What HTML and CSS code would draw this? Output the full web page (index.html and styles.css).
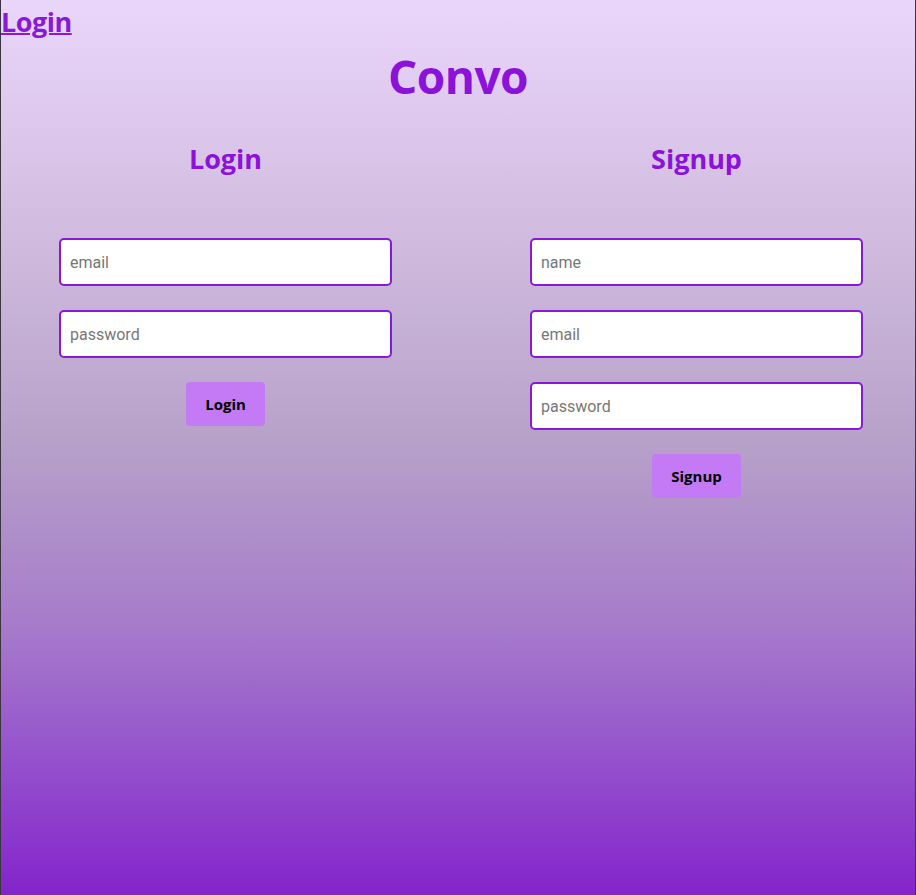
FILE: index.html
```html
<!DOCTYPE html>
<html>
<head>
<meta charset="utf-8">
<link rel="stylesheet" href="styles.css">
</head>
<body>
<a class="top-link" href="#">Login</a>
<h1 class="brand">Convo</h1>
<div class="columns">
  <form class="panel">
    <h2 class="panel-title">Login</h2>
    <input class="field" type="text" placeholder="email">
    <input class="field" type="password" placeholder="password">
    <button class="btn" type="button">Login</button>
  </form>
  <form class="panel">
    <h2 class="panel-title">Signup</h2>
    <input class="field" type="text" placeholder="name">
    <input class="field" type="text" placeholder="email">
    <input class="field" type="password" placeholder="password">
    <button class="btn" type="button">Signup</button>
  </form>
</div>
</body>
</html>
```
FILE: styles.css
```css
html, body {
  margin: 0;
  height: 100%;
}
body {
  box-sizing: border-box;
  border-left: 1px solid #3a3540;
  border-right: 1px solid #3a3540;
  background: linear-gradient(to bottom, #ebd6fb 0%, #cdb8dc 30%, #b6a0c8 50%, #a67bcb 70%, #9451cc 85%, #8424cb 100%);
  font-family: "Open Sans", "DejaVu Sans", sans-serif;
}
.top-link {
  display: inline-block;
  font-size: 27px;
  font-weight: 700;
  line-height: 44px;
  color: #8a18d8;
  text-decoration: underline;
  text-decoration-thickness: 2px;
  letter-spacing: -0.5px;
}
.brand {
  margin: 0;
  text-align: center;
  font-size: 46px;
  font-weight: 700;
  line-height: 64px;
  color: #8a12d9;
  letter-spacing: -0.5px;
}
.columns {
  display: flex;
  gap: 138px;
  padding-left: 58px;
  margin-top: 31px;
}
.panel {
  width: 333px;
  display: flex;
  flex-direction: column;
  align-items: center;
}
.panel-title {
  margin: 0 0 59px;
  font-size: 27px;
  font-weight: 700;
  line-height: 40px;
  color: #8a12d9;
}
.field {
  box-sizing: border-box;
  width: 333px;
  height: 48px;
  margin-bottom: 24px;
  padding: 0 9px;
  border: 2px solid #8a18d8;
  border-radius: 5px;
  background: #fff;
  font-family: "Roboto", "Liberation Sans", sans-serif;
  font-size: 16px;
  outline: none;
}
.field::placeholder {
  color: #777;
}
.btn {
  margin-top: 0;
  height: 44px;
  padding: 0 19px;
  border: none;
  border-radius: 4px;
  background: #c47af5;
  color: #000;
  font-family: "Open Sans", "DejaVu Sans", sans-serif;
  font-size: 15px;
  font-weight: 700;
}
```
